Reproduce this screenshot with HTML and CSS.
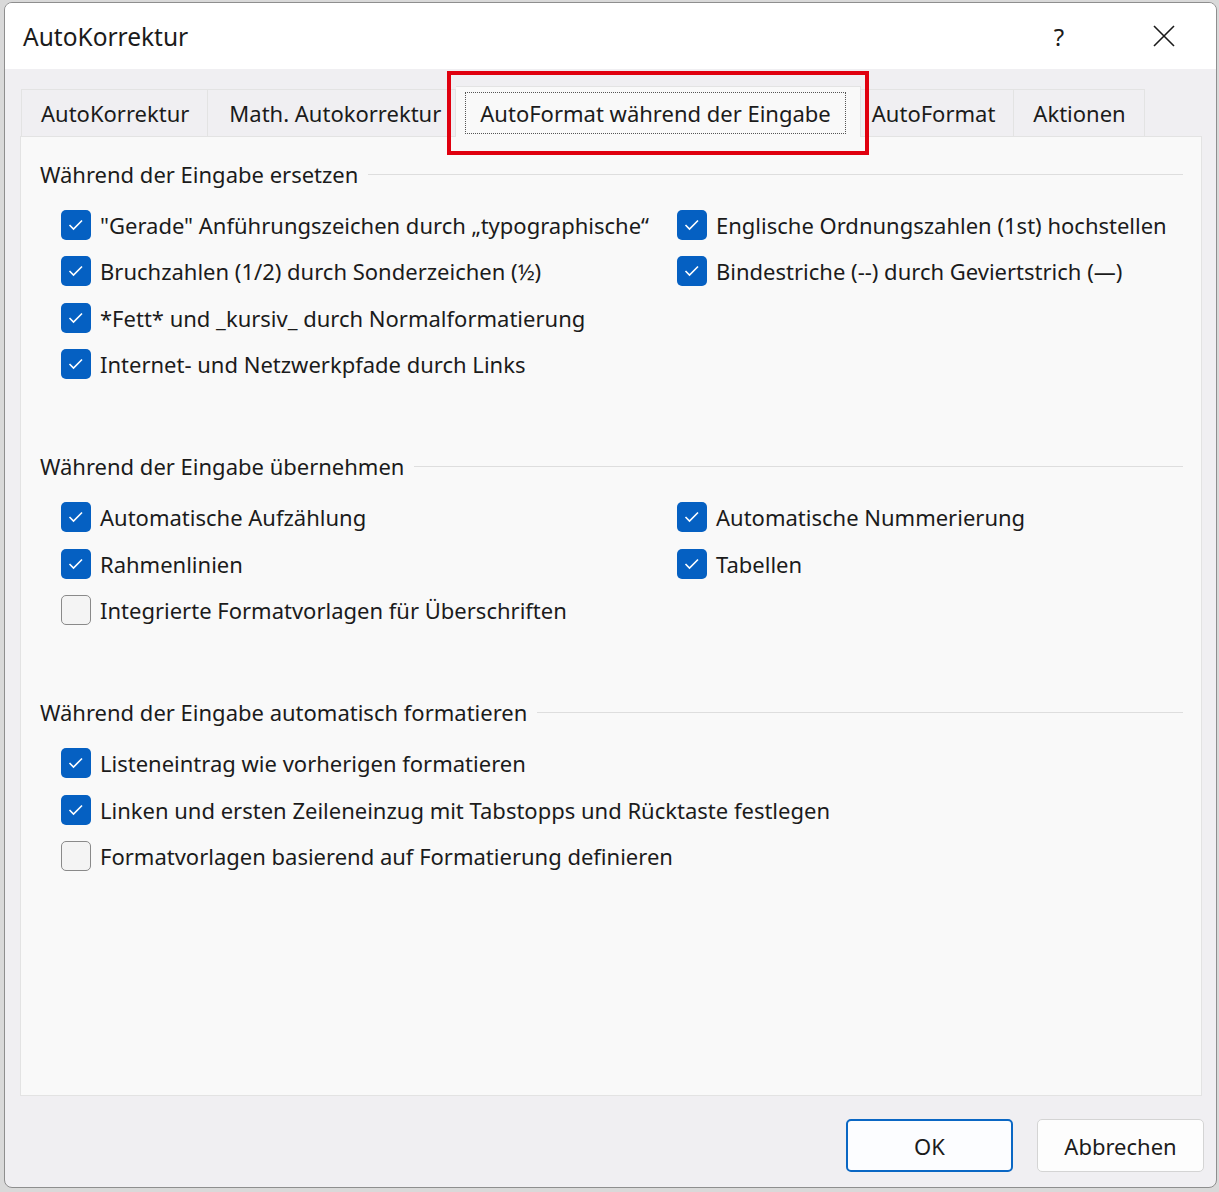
FILE: index.html
```html
<!DOCTYPE html>
<html lang="de">
<head>
    <meta charset="UTF-8">
    <title>AutoKorrektur</title>
    <link rel="stylesheet" href="styles.css">
</head>
<body>
    <div class="dialog">
        <div class="title-bar">
            <div class="title">AutoKorrektur</div>
            <div class="title-help">?</div>
            <div class="title-close">
                <svg width="22" height="22" viewBox="0 0 22 22"><path d="M1 1 L21 21 M21 1 L1 21" stroke="#1a1a1a" stroke-width="1.6" fill="none"/></svg>
            </div>
        </div>

        <div class="dialog-body">
            <div class="tabs">
                <div class="tab tab-first">AutoKorrektur</div>
                <div class="tab tab-math">Math. Autokorrektur</div>
                <div class="tab tab-active">
                    <span class="focus-rect">AutoFormat während der Eingabe</span>
                    <span class="highlight"></span>
                </div>
                <div class="tab tab-after">AutoFormat</div>
                <div class="tab">Aktionen</div>
            </div>

            <div class="tab-panel">
                <div class="group">
                    <div class="group-title"><span>Während der Eingabe ersetzen</span></div>
                    <div class="option-grid">
                        <label class="option"><span class="box checked"></span>"Gerade" Anführungszeichen durch „typographische“</label>
                        <label class="option"><span class="box checked"></span>Englische Ordnungszahlen (1st) hochstellen</label>
                        <label class="option"><span class="box checked"></span>Bruchzahlen (1/2) durch Sonderzeichen (½)</label>
                        <label class="option"><span class="box checked"></span>Bindestriche (--) durch Geviertstrich (—)</label>
                        <label class="option"><span class="box checked"></span>*Fett* und _kursiv_ durch Normalformatierung</label>
                        <div></div>
                        <label class="option"><span class="box checked"></span>Internet- und Netzwerkpfade durch Links</label>
                        <div></div>
                    </div>
                </div>

                <div class="group">
                    <div class="group-title"><span>Während der Eingabe übernehmen</span></div>
                    <div class="option-grid">
                        <label class="option"><span class="box checked"></span>Automatische Aufzählung</label>
                        <label class="option"><span class="box checked"></span>Automatische Nummerierung</label>
                        <label class="option"><span class="box checked"></span>Rahmenlinien</label>
                        <label class="option"><span class="box checked"></span>Tabellen</label>
                        <label class="option wide"><span class="box"></span>Integrierte Formatvorlagen für Überschriften</label>
                    </div>
                </div>

                <div class="group">
                    <div class="group-title"><span>Während der Eingabe automatisch formatieren</span></div>
                    <div class="option-grid">
                        <label class="option wide"><span class="box checked"></span>Listeneintrag wie vorherigen formatieren</label>
                        <label class="option wide"><span class="box checked"></span>Linken und ersten Zeileneinzug mit Tabstopps und Rücktaste festlegen</label>
                        <label class="option wide"><span class="box"></span>Formatvorlagen basierend auf Formatierung definieren</label>
                    </div>
                </div>
            </div>

            <div class="button-row">
                <button class="btn btn-default">OK</button>
                <button class="btn">Abbrechen</button>
            </div>
        </div>
    </div>
</body>
</html>
```

FILE: styles.css
```css
body {
    margin: 0;
    background: #d9d9d9;
    font-family: "Noto Sans", "Open Sans", sans-serif;
    color: #1b1b1b;
}
.dialog {
    margin: 2px 0 0 4px;
    width: 1213px;
    height: 1186px;
    box-sizing: border-box;
    border: 1px solid #8e8e8e;
    border-radius: 8px;
    overflow: hidden;
    display: flex;
    flex-direction: column;
    background: #f0eff2;
}
.title-bar {
    height: 66px;
    flex: none;
    background: #ffffff;
    display: flex;
    align-items: center;
}
.title {
    flex: 1;
    padding-left: 18px;
    font-size: 24.5px;
}
.title-help {
    width: 22px;
    text-align: center;
    font-size: 24px;
    margin-right: 83px;
}
.title-close {
    width: 22px;
    height: 22px;
    margin-right: 41px;
}
.dialog-body {
    flex: 1;
    display: flex;
    flex-direction: column;
    padding: 0 14px 0 15px;
}
.tabs {
    display: flex;
    align-items: flex-end;
    height: 67px;
    padding-left: 1px;
}
.tab {
    position: relative;
    height: 47px;
    box-sizing: border-box;
    padding: 0 18px 0 19px;
    display: flex;
    align-items: center;
    font-size: 22px;
    border: 1px solid #e3e3e3;
    border-bottom: none;
    background: #f0eff2;
    white-space: nowrap;
}
.tab + .tab {
    border-left: none;
}
.tab-math {
    padding: 0 14px 0 21px;
}
.tab-active {
    height: 51px;
    margin-bottom: -1px;
    align-items: flex-start;
    padding: 5px 14px 0 9px;
    background: #f9f9f9;
    z-index: 1;
}
.tab-after {
    padding-left: 11px;
}
.focus-rect {
    display: flex;
    align-items: center;
    height: 42px;
    box-sizing: border-box;
    border: 1px dotted #555;
    padding: 0 14px 0 14px;
}
.highlight {
    position: absolute;
    left: -9px;
    right: -9px;
    top: -16px;
    height: 84px;
    border: 4px solid #e0000f;
    box-sizing: border-box;
}
.tab-panel {
    height: 960px;
    box-sizing: border-box;
    background: #f9f9f9;
    border: 1px solid #e3e3e3;
    padding: 21px 18px 0 19px;
}
.group {
    margin-bottom: 63px;
}
.group-title {
    display: flex;
    align-items: center;
    font-size: 22px;
    height: 32px;
}
.group-title::after {
    content: "";
    flex: 1;
    height: 1px;
    background: #dedede;
    margin-left: 10px;
}
.option-grid {
    display: grid;
    grid-template-columns: 616px 1fr;
    padding: 12px 0 0 21px;
}
.option {
    display: flex;
    align-items: center;
    height: 46.3px;
    font-size: 22px;
    white-space: nowrap;
}
.option.wide {
    grid-column: 1 / 3;
}
.box {
    width: 30px;
    height: 30px;
    box-sizing: border-box;
    border-radius: 5px;
    border: 1.5px solid #8a8a8a;
    background: #f4f4f4;
    margin-right: 9px;
    flex: none;
}
.box.checked {
    border: none;
    background: #0560c2 url("data:image/svg+xml,%3Csvg xmlns='http://www.w3.org/2000/svg' width='30' height='30'%3E%3Cpath d='M8.5 15 L12.5 19 L21 10.5' stroke='white' stroke-width='1.6' fill='none'/%3E%3C/svg%3E") no-repeat center;
}
.button-row {
    flex: 1;
    display: flex;
    justify-content: flex-end;
    align-items: flex-start;
    padding-top: 23px;
    margin-right: -2px;
    gap: 24px;
}
.btn {
    width: 167px;
    height: 53px;
    font-family: inherit;
    font-size: 22px;
    color: #1b1b1b;
    background: #fdfdfd;
    border: 1px solid #d4d4d4;
    border-radius: 5px;
}
.btn-default {
    border: 2px solid #0a67c4;
    background: #fcfdff;
}
```
